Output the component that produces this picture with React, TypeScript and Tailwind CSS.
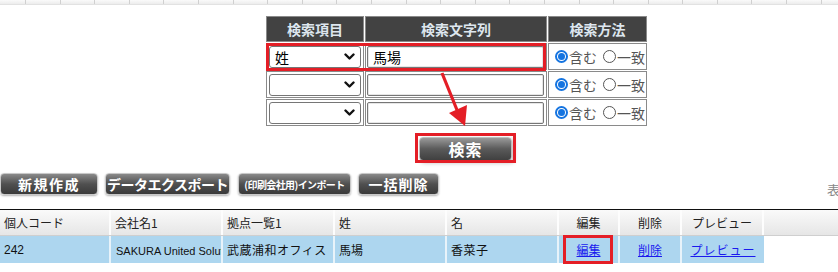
import React from "react";

const JP = "font-['Noto_Sans_CJK_JP',sans-serif]";
const ARJP = "font-['Liberation_Sans','Noto_Sans_CJK_JP',sans-serif]";

function Chevron() {
  return (
    <svg width="11" height="8" viewBox="0 0 11 8">
      <path d="M1.5 1.5 L5.5 5.5 L9.5 1.5" fill="none" stroke="#111" strokeWidth="2.4" strokeLinecap="round" strokeLinejoin="round" />
    </svg>
  );
}

function SelectBox({ value }: { value?: string }) {
  return (
    <div className="w-[92px] h-[22px] border border-[#767676] rounded-[3px] bg-white flex items-center justify-between pl-[5px] pr-[5px]">
      <span className={`text-[14px] text-black leading-none ${JP}`}>{value ?? ""}</span>
      <Chevron />
    </div>
  );
}

function TextBox({ value }: { value?: string }) {
  return (
    <div className="w-[177px] h-[22px] border border-[#767676] shadow-[inset_0_0_0_1px_#e6e6e6] rounded-[2px] bg-white flex items-center pl-[5px]">
      <span className={`text-[14px] text-black leading-none ${JP}`}>{value ?? ""}</span>
    </div>
  );
}

function Radios() {
  return (
    <div className={`flex items-center pl-[6px] text-[14px] text-[#555] ${JP}`}>
      <span className="w-[13px] h-[13px] rounded-full border-[2px] border-[#1574e0] bg-white flex items-center justify-center">
        <span className="w-[7px] h-[7px] rounded-full bg-[#1574e0]" />
      </span>
      <span className="ml-[1px] leading-none">含む</span>
      <span className="ml-[6px] w-[13px] h-[13px] rounded-full border border-[#555] bg-white" />
      <span className="ml-[1px] leading-none">一致</span>
    </div>
  );
}

function GrayButton({ children, w, small }: { children: React.ReactNode; w: string; small?: boolean }) {
  return (
    <div
      className={`${w} shrink-0 h-[22px] rounded-[4px] border border-[#c8c8c8] bg-gradient-to-b from-[#8a8a8a] via-[#505050] to-[#3a3a3a] shadow-[0_1px_2px_rgba(0,0,0,0.3)] flex items-center justify-center whitespace-nowrap text-white font-bold ${small ? "text-[10px] tracking-[-0.6px]" : "text-[14px]"} ${JP}`}
    >
      {children}
    </div>
  );
}

const cols = [
  { w: "w-[111px]", label: "個人コード", center: false },
  { w: "w-[112px]", label: "会社名1", center: false },
  { w: "w-[112px]", label: "拠点一覧1", center: false },
  { w: "w-[112px]", label: "姓", center: false },
  { w: "w-[112px]", label: "名", center: false },
  { w: "w-[61px]", label: "編集", center: true },
  { w: "w-[62px]", label: "削除", center: true },
  { w: "w-[82px]", label: "プレビュー", center: true },
];

export default function App() {
  const strip = Array.from({ length: 24 });
  return (
    <div className="relative w-[838px] h-[272px] overflow-hidden bg-white">
      {/* top strip */}
      <div className="h-[5px] flex bg-gradient-to-b from-[#fafafa] to-[#ececec] border-b border-[#e2e2e2]">
        <div className="w-[26px] shrink-0 border-r border-[#d0d0d0]" />
        {strip.map((_, i) => (
          <div key={i} className="w-[34.6px] shrink-0 border-r border-[#d0d0d0]" />
        ))}
      </div>

      {/* search table */}
      <table className="ml-[265px] mt-[10px] border-separate border-spacing-[1px]">
        <thead>
          <tr>
            <th className={`w-[98px] h-[26px] p-0 bg-[#424242] border border-[#8a8a8a] text-[14px] font-bold text-[#dde6ee] ${JP}`}>検索項目</th>
            <th className={`w-[182px] h-[26px] p-0 bg-[#424242] border border-[#8a8a8a] text-[14px] font-bold text-[#dde6ee] ${JP}`}>検索文字列</th>
            <th className={`w-[99px] h-[26px] p-0 bg-[#424242] border border-[#8a8a8a] text-[14px] font-bold text-[#dde6ee] ${JP}`}>検索方法</th>
          </tr>
        </thead>
        <tbody>
          {[{ s: "姓", t: "馬場" }, {}, {}].map((r: { s?: string; t?: string }, i) => (
            <tr key={i}>
              <td className="h-[27px] p-0 pl-[2px] border border-[#8a8a8a]">
                <SelectBox value={r.s} />
              </td>
              <td className="h-[27px] p-0 pl-[1px] border border-[#8a8a8a]">
                <TextBox value={r.t} />
              </td>
              <td className="h-[27px] p-0 border border-[#8a8a8a]">
                <Radios />
              </td>
            </tr>
          ))}
        </tbody>
      </table>

      {/* search button */}
      <div className="ml-[415px] mt-[7px] w-[101px] h-[30px] flex items-center justify-center">
        <div className={`w-[93px] h-[24px] rounded-[4px] border border-[#bdbdbd] bg-gradient-to-b from-[#9a9a9a] via-[#5a5a5a] to-[#404040] shadow-[2px_2px_4px_rgba(0,0,0,0.25)] flex items-center justify-center text-white text-[16px] font-bold tracking-[1px] ${JP}`}>
          検索
        </div>
      </div>

      {/* button row */}
      <div className="mt-[9px] h-[22px] flex items-start">
        <GrayButton w="w-[98px]">
          <span className="tracking-[1.5px]">新規作成</span>
        </GrayButton>
        <GrayButton w="w-[125px] ml-[7px]">
          <span className="tracking-[-0.5px]">データエクスポート</span>
        </GrayButton>
        <GrayButton w="w-[113px] ml-[8px]" small>(印刷会社用)インポート</GrayButton>
        <GrayButton w="w-[81px] ml-[7px]">
          <span className="tracking-[1px]">一括削除</span>
        </GrayButton>
        <span className={`ml-auto mt-[10px] w-[11px] h-[13px] overflow-hidden whitespace-nowrap text-[13px] leading-none text-[#888] ${JP}`}>表示件数</span>
      </div>

      {/* data table */}
      <div className="mt-[14px] border-t border-[#111]">
        <div className="h-[26px] flex bg-gradient-to-b from-[#fafafa] to-[#e6e6e6] border-b border-[#cfcfcf]">
          {cols.map((c) => (
            <div
              key={c.label}
              className={`${c.w} shrink-0 border-r-[2px] border-[#fdfdfd] flex items-center ${c.center ? "justify-center" : "pl-[4px]"} text-[12px] text-[#222] ${JP}`}
            >
              {c.label}
            </div>
          ))}
        </div>
        <div className={`h-[27px] w-[764px] flex bg-[#add6ef] text-[12px] text-[#111] ${ARJP}`}>
          <div className="w-[111px] shrink-0 border-r-[2px] border-[#e8f3fa] pl-[4px] pt-[5px]">242</div>
          <div className="w-[112px] shrink-0 border-r-[2px] border-[#e8f3fa] pl-[5px] flex items-center pt-[3px] overflow-hidden whitespace-nowrap text-[11px]">SAKURA United Solutions</div>
          <div className="w-[112px] shrink-0 border-r-[2px] border-[#e8f3fa] pl-[4px] flex items-center pt-[3px] tracking-[0.5px]">武蔵浦和オフィス</div>
          <div className="w-[112px] shrink-0 border-r-[2px] border-[#e8f3fa] pl-[4px] flex items-center pt-[3px]">馬場</div>
          <div className="w-[112px] shrink-0 border-r-[2px] border-[#e8f3fa] pl-[4px] flex items-center pt-[3px] tracking-[0.5px]">香菜子</div>
          <div className="w-[61px] shrink-0 border-r-[2px] border-[#e8f3fa] flex items-center justify-center pt-[3px]">
            <span className="text-[#1a1aee] underline">編集</span>
          </div>
          <div className="w-[62px] shrink-0 border-r-[2px] border-[#e8f3fa] flex items-center justify-center pt-[3px]">
            <span className="text-[#1a1aee] underline">削除</span>
          </div>
          <div className="w-[82px] shrink-0 flex items-center justify-center pt-[3px]">
            <span className="text-[#1a1aee] underline tracking-[1px]">プレビュー</span>
          </div>
        </div>
      </div>

      {/* annotations */}
      <div className="absolute left-[266px] top-[43px] w-[280px] h-[28px] border-[3px] border-[#e41e26]" />
      <div className="absolute left-[415px] top-[133px] w-[101px] h-[30px] border-[3px] border-[#e41e26]" />
      <div className="absolute left-[563px] top-[235px] w-[50px] h-[29px] border-[3px] border-[#e41e26]" />
      <svg className="absolute left-0 top-0 pointer-events-none" width="838" height="272">
        <line x1="442" y1="73" x2="457" y2="110" stroke="#e41e26" strokeWidth="3.2" />
        <polygon points="465,126 449,113 467,105" fill="#e41e26" />
      </svg>
    </div>
  );
}
